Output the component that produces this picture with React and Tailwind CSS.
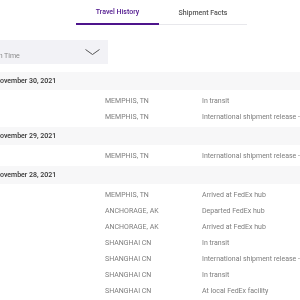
const GROUPS = [
  {
    date: 'November 30, 2021',
    rows: [
      ['MEMPHIS, TN', 'In transit'],
      ['MEMPHIS, TN', 'International shipment release - Import'],
    ],
  },
  {
    date: 'November 29, 2021',
    rows: [['MEMPHIS, TN', 'International shipment release - Import']],
  },
  {
    date: 'November 28, 2021',
    rows: [
      ['MEMPHIS, TN', 'Arrived at FedEx hub'],
      ['ANCHORAGE, AK', 'Departed FedEx hub'],
      ['ANCHORAGE, AK', 'Arrived at FedEx hub'],
      ['SHANGHAI CN', 'In transit'],
      ['SHANGHAI CN', 'International shipment release - Export'],
      ['SHANGHAI CN', 'In transit'],
      ['SHANGHAI CN', 'At local FedEx facility'],
    ],
  },
]

export default function App() {
  return (
    <div className="w-[300px] h-[300px] overflow-hidden bg-white">
      <div className="will-change-transform font-['Roboto',sans-serif] text-[7px]">
        {/* Tabs */}
        <div className="flex ml-[76px]">
          <div className="w-[83px] h-[25px] pt-[2px] flex items-center justify-center border-b-2 border-[#4d148c] text-[#4d148c] font-medium">
            Travel History
          </div>
          <div className="w-[88px] h-[25px] pt-[2px] flex items-center justify-center border-b border-[#e8e8ec] text-[#555] font-medium">
            Shipment Facts
          </div>
        </div>

        {/* Sort dropdown */}
        <div className="mt-[15px] w-[108px] h-[24px] bg-[#f2f2f6] flex">
          <span className="self-end pb-[3px] -ml-[13px] text-[#8a8a8a] whitespace-nowrap leading-[10px]">Scan Time</span>
          <svg viewBox="0 0 15 6" className="w-[15px] h-[6px] self-center ml-auto mr-[8px] mb-[1px]">
            <polyline points="0.5,0.5 7.5,5.5 14.5,0.5" fill="none" stroke="#555" strokeWidth="1" />
          </svg>
        </div>

        {/* Travel history */}
        <div className="mt-[8px]">
          {GROUPS.map(g => (
            <div key={g.date}>
              <div className="h-[18px] bg-[#f7f7f8] flex items-center text-[#333] font-medium whitespace-nowrap">
                <span className="-ml-[5px]">{g.date}</span>
              </div>
              <div className="pt-[3px] pb-[2px]">
                {g.rows.map((r, i) => (
                  <div key={i} className="h-[16px] flex items-center pl-[105px] text-[#7d7d7d] whitespace-nowrap">
                    <span className="w-[97px] shrink-0">{r[0]}</span>
                    <span>{r[1]}</span>
                  </div>
                ))}
              </div>
            </div>
          ))}
        </div>
      </div>
    </div>
  )
}
